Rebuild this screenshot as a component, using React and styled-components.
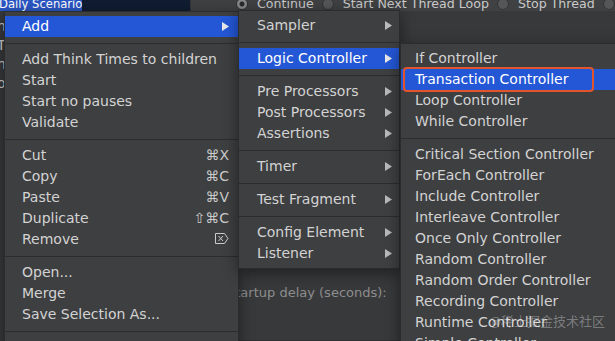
import React from "react";
import styled, { createGlobalStyle } from "styled-components";

const Global = createGlobalStyle`
  html, body { margin: 0; padding: 0; background: #38393b; }
  body { font-family: "DejaVu Sans", "Liberation Sans", sans-serif; }
`;

const Page = styled.div`
  position: relative;
  width: 615px;
  height: 341px;
  overflow: hidden;
  background: #38393b;
  font-family: "DejaVu Sans", "Liberation Sans", sans-serif;
  font-size: 14px;
  color: #d3d3d3;
`;

const TopBar = styled.div`
  display: flex;
  height: 11px;
  overflow: hidden;
  background: #404143;
  font-size: 12.6px;
`;

const TreeSel = styled.div`
  flex: none;
  width: 82px;
  overflow: hidden;
  background: #2a56c4;
  color: #fff;
  line-height: 8px;
  font-size: 11.6px;
  text-indent: -1px;
  white-space: nowrap;
`;

const TreeFill = styled.div`
  width: 108px;
  flex: none;
  background: #101c31;
`;

const RadioGroup = styled.div`
  display: flex;
  align-items: center;
  gap: 8px;
  padding-left: 45px;
  margin-top: -4px;
  height: 16px;
  border-left: 1px solid #333436;
  white-space: nowrap;
`;

const Radio = styled.span`
  flex: none;
  width: 12px;
  height: 12px;
  border-radius: 50%;
  background: ${(p) => (p.$on ? "radial-gradient(circle, #2a2a2a 0 2px, #8a8b8d 3px)" : "#555658")};
  box-sizing: border-box;
  border: 1px solid #333;
`;

const RadioLabel = styled.span`
  color: #c9c9c9;
  line-height: 16px;
  margin-left: 1px;
`;

const Main = styled.div`
  display: flex;
  height: 330px;
`;

const Tree = styled.div`
  width: 227px;
  flex: none;
  padding-top: 6px;
  display: flex;
  flex-direction: column;
`;

const TreeRow = styled.div`
  height: 19px;
  line-height: 19px;
  text-indent: -3px;
  color: #cfcfcf;
  white-space: nowrap;
`;

const Panel = styled.div`
  flex: 1;
  display: flex;
  flex-direction: column;
  border-bottom: 1px solid #2f3032;
`;

const FieldLabel = styled.div`
  margin-top: 274px;
  font-size: 13px;
  color: #8d8d8d;
  white-space: nowrap;
`;

const Menu = styled.div`
  position: absolute;
  left: ${(p) => p.$left}px;
  top: ${(p) => p.$top}px;
  width: ${(p) => p.$width}px;
  box-sizing: border-box;
  padding: 4px 0 4px;
  background: #3e3f41;
  border: 1px solid #2b2c2e;
  box-shadow: 0 4px 14px rgba(0, 0, 0, 0.45);
  display: flex;
  flex-direction: column;
`;

const Item = styled.div`
  display: flex;
  align-items: center;
  box-sizing: border-box;
  height: 21px;
  padding: 0 ${(p) => p.$padR}px 2px ${(p) => p.$padL}px;
  color: ${(p) => (p.$active ? "#ffffff" : "#d3d3d3")};
  background: ${(p) => (p.$active ? "#2457d6" : "transparent")};
  white-space: nowrap;
`;

const Label = styled.span`
  flex: 1;
`;

const Shortcut = styled.span`
  color: #cbcbcb;
  display: flex;
  align-items: center;
`;

const Arrow = styled.svg`
  width: 7px;
  height: 9px;
  margin-top: 2px;
  fill: ${(p) => (p.$active ? "#e8e8e8" : "#b9b9b9")};
`;

const Sep = styled.div`
  height: 12px;
  display: flex;
  align-items: center;
  &::before {
    content: "";
    flex: 1;
    height: 1px;
    background: #2c2d2f;
  }
`;

const Annotation = styled.div`
  position: absolute;
  left: 403px;
  top: 67px;
  width: 191px;
  height: 25px;
  box-sizing: border-box;
  border: 2px solid #e2542c;
  border-radius: 4px;
`;

const Watermark = styled.div`
  position: absolute;
  right: 10px;
  bottom: 11px;
  font-family: "Noto Sans CJK SC", "DejaVu Sans", sans-serif;
  font-size: 13px;
  color: rgba(255, 255, 255, 0.32);
  white-space: nowrap;
`;

const ArrowIcon = ({ active }) => (
  <Arrow $active={active} viewBox="0 0 7 9">
    <path d="M0 0 L7 4.5 L0 9 Z" />
  </Arrow>
);

const DeleteIcon = () => (
  <svg width="14" height="11" viewBox="0 0 14 11" fill="none" stroke="#cbcbcb" strokeWidth="1">
    <path d="M0.5 0.5 H9.5 L13 5.5 L9.5 10.5 H0.5 Z" />
    <path d="M3.5 3 L8 8 M8 3 L3.5 8" />
  </svg>
);

const menu1 = [
  { t: "Add", active: true, arrow: true },
  "sep",
  { t: "Add Think Times to children" },
  { t: "Start" },
  { t: "Start no pauses" },
  { t: "Validate" },
  "sep",
  { t: "Cut", k: "⌘X" },
  { t: "Copy", k: "⌘C" },
  { t: "Paste", k: "⌘V" },
  { t: "Duplicate", k: "⇧⌘C" },
  { t: "Remove", del: true },
  "sep",
  { t: "Open..." },
  { t: "Merge" },
  { t: "Save Selection As..." },
  "sep",
  { t: "Save Node As Image" },
];

const menu2 = [
  { t: "Sampler", arrow: true },
  "sep",
  { t: "Logic Controller", arrow: true, active: true },
  "sep",
  { t: "Pre Processors", arrow: true },
  { t: "Post Processors", arrow: true },
  { t: "Assertions", arrow: true },
  "sep",
  { t: "Timer", arrow: true },
  "sep",
  { t: "Test Fragment", arrow: true },
  "sep",
  { t: "Config Element", arrow: true },
  { t: "Listener", arrow: true },
];

const menu3 = [
  { t: "If Controller" },
  { t: "Transaction Controller", active: true },
  { t: "Loop Controller" },
  { t: "While Controller" },
  "sep",
  { t: "Critical Section Controller" },
  { t: "ForEach Controller" },
  { t: "Include Controller" },
  { t: "Interleave Controller" },
  { t: "Once Only Controller" },
  { t: "Random Controller" },
  { t: "Random Order Controller" },
  { t: "Recording Controller" },
  { t: "Runtime Controller" },
  { t: "Simple Controller" },
];

const renderItems = (items, padL, padR) =>
  items.map((it, i) =>
    it === "sep" ? (
      <Sep key={i} />
    ) : (
      <Item key={i} $active={it.active} $padL={padL} $padR={padR}>
        <Label>{it.t}</Label>
        {it.k && <Shortcut>{it.k}</Shortcut>}
        {it.del && (
          <Shortcut>
            <DeleteIcon />
          </Shortcut>
        )}
        {it.arrow && <ArrowIcon active={it.active} />}
      </Item>
    )
  );

export default function App() {
  return (
    <>
      <Global />
      <Page>
        <TopBar>
          <TreeSel>Daily Scenario</TreeSel>
          <TreeFill />
          <RadioGroup>
            <Radio $on />
            <RadioLabel>Continue</RadioLabel>
            <Radio />
            <RadioLabel>Start Next Thread Loop</RadioLabel>
            <Radio />
            <RadioLabel>Stop Thread</RadioLabel>
            <Radio />
          </RadioGroup>
        </TopBar>
        <Main>
          <Tree>
            <TreeRow>nt</TreeRow>
            <TreeRow>Th</TreeRow>
            <TreeRow>nd</TreeRow>
            <TreeRow>or</TreeRow>
          </Tree>
          <Panel>
            <FieldLabel>Startup delay (seconds):</FieldLabel>
          </Panel>
        </Main>

        <Menu $left={4} $top={11} $width={235}>
          {renderItems(menu1, 17, 9)}
        </Menu>
        <Menu $left={238} $top={10} $width={162}>
          {renderItems(menu2, 18, 7)}
        </Menu>
        <Menu $left={400} $top={43} $width={240}>
          {renderItems(menu3, 14, 10)}
        </Menu>
        <Annotation />
        <Watermark>@稀土掘金技术社区</Watermark>
      </Page>
    </>
  );
}
